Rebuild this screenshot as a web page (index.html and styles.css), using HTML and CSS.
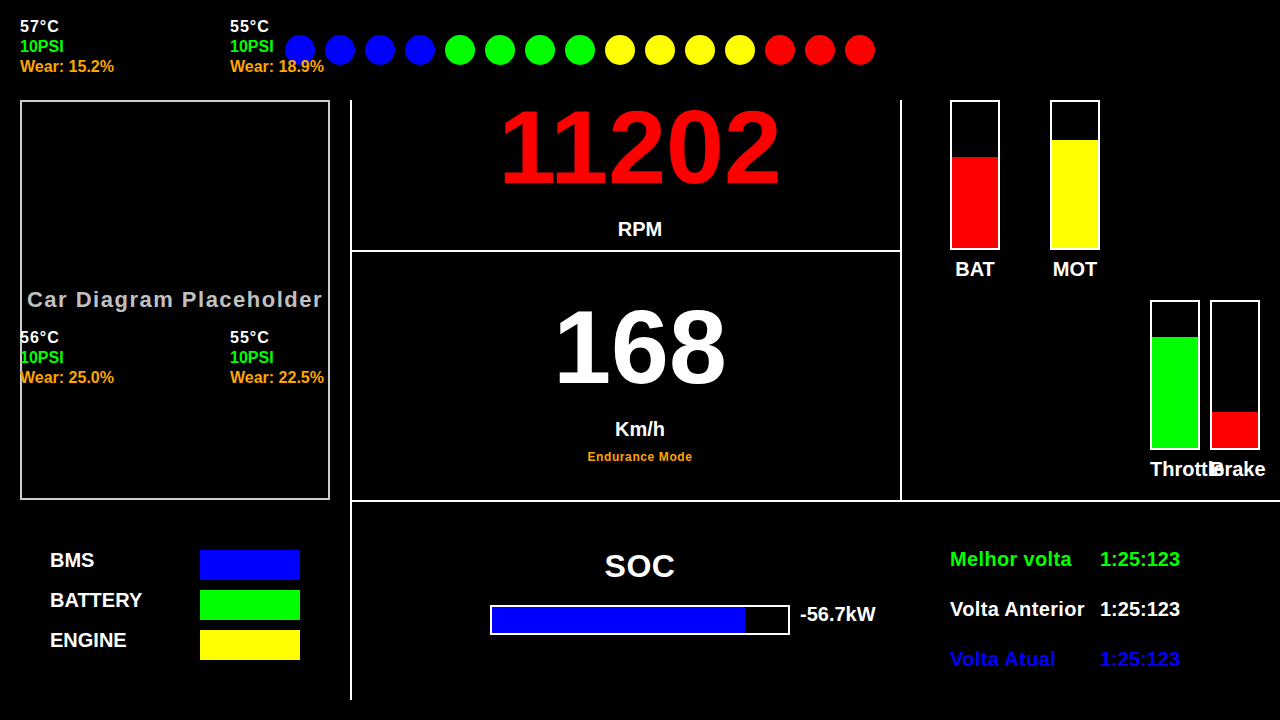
FILE: index.html
```html
<!DOCTYPE html>
<html lang="pt">
<head>
<meta charset="utf-8">
<title>Dashboard</title>
<link rel="stylesheet" href="styles.css">
</head>
<body>
<div class="dash">
  <header class="top">
    <div class="leds">
      <span class="led blue"></span><span class="led blue"></span><span class="led blue"></span><span class="led blue"></span>
      <span class="led green"></span><span class="led green"></span><span class="led green"></span><span class="led green"></span>
      <span class="led yellow"></span><span class="led yellow"></span><span class="led yellow"></span><span class="led yellow"></span>
      <span class="led red"></span><span class="led red"></span><span class="led red"></span>
    </div>
  </header>
  <main class="main">
    <section class="left">
      <div class="car">Car Diagram Placeholder</div>
      <div class="legend">
        <div class="legend-row"><span class="legend-label">BMS</span><span class="swatch blue"></span></div>
        <div class="legend-row"><span class="legend-label">BATTERY</span><span class="swatch green"></span></div>
        <div class="legend-row"><span class="legend-label">ENGINE</span><span class="swatch yellow"></span></div>
      </div>
    </section>
    <section class="panel">
      <div class="upper">
        <div class="gauges">
          <div class="rpm">
            <div class="big rpm-value">11202</div>
            <div class="unit">RPM</div>
          </div>
          <div class="speed">
            <div class="big speed-value">168</div>
            <div class="unit">Km/h</div>
            <div class="mode">Endurance Mode</div>
          </div>
        </div>
        <div class="bars">
          <div class="bar-row temp-bars">
            <div class="meter"><div class="tube"><div class="fill red" style="height:62%"></div></div><div class="meter-label">BAT</div></div>
            <div class="meter"><div class="tube"><div class="fill yellow" style="height:74%"></div></div><div class="meter-label">MOT</div></div>
          </div>
          <div class="bar-row pedal-bars">
            <div class="meter"><div class="tube"><div class="fill green" style="height:76%"></div></div><div class="meter-label">Throttle</div></div>
            <div class="meter"><div class="tube"><div class="fill red" style="height:25%"></div></div><div class="meter-label">Brake</div></div>
          </div>
        </div>
      </div>
      <div class="lower">
        <div class="soc-area">
          <div class="soc">
            <div class="soc-title">SOC</div>
            <div class="soc-bar"><div class="soc-fill" style="width:85.5%"></div></div>
          </div>
          <div class="power">-56.7kW</div>
        </div>
        <div class="laps">
          <div class="lap best"><span class="lap-name">Melhor volta</span><span class="lap-time">1:25:123</span></div>
          <div class="lap prev"><span class="lap-name">Volta Anterior</span><span class="lap-time">1:25:123</span></div>
          <div class="lap current"><span class="lap-name">Volta Atual</span><span class="lap-time">1:25:123</span></div>
        </div>
      </div>
    </section>
  </main>
  <div class="tire tire-fl"><div class="temp">57°C</div><div class="psi">10PSI</div><div class="wear">Wear: 15.2%</div></div>
  <div class="tire tire-fr"><div class="temp">55°C</div><div class="psi">10PSI</div><div class="wear">Wear: 18.9%</div></div>
  <div class="tire tire-rl"><div class="temp">56°C</div><div class="psi">10PSI</div><div class="wear">Wear: 25.0%</div></div>
  <div class="tire tire-rr"><div class="temp">55°C</div><div class="psi">10PSI</div><div class="wear">Wear: 22.5%</div></div>
</div>
</body>
</html>
```

FILE: styles.css
```css
html, body {
  margin: 0;
  padding: 0;
  background: #000;
}
body {
  font-family: "Liberation Sans", Arial, sans-serif;
  font-weight: bold;
  color: #fff;
}
.dash {
  position: relative;
  width: 1280px;
  height: 720px;
  overflow: hidden;
}
.blue { background: #0000ff; }
.green { background: #00ff00; }
.yellow { background: #ffff00; }
.red { background: #ff0000; }

/* LED strip */
.top {
  height: 100px;
  box-sizing: border-box;
  padding: 35px 0 0 285px;
}
.leds {
  display: flex;
  gap: 10px;
}
.led {
  width: 30px;
  height: 30px;
  border-radius: 50%;
}

.main {
  display: flex;
  height: 620px;
}

/* left column */
.left {
  width: 350px;
  flex: none;
}
.car {
  margin-left: 20px;
  width: 310px;
  height: 400px;
  box-sizing: border-box;
  border: 2px solid #cccccc;
  display: flex;
  align-items: center;
  justify-content: center;
  color: #c0c0c0;
  font-size: 22px;
  letter-spacing: 1.5px;
  white-space: nowrap;
}
.legend {
  margin-top: 50px;
  padding-left: 50px;
  display: flex;
  flex-direction: column;
  gap: 10px;
}
.legend-row {
  display: flex;
  height: 30px;
}
.legend-label {
  width: 150px;
  font-size: 20px;
  line-height: 20px;
}
.swatch {
  width: 100px;
  height: 30px;
}

/* right area */
.panel {
  width: 930px;
  flex: none;
  height: 600px;
  border-left: 2px solid #fff;
  display: flex;
  flex-direction: column;
}
.upper {
  height: 400px;
  display: flex;
  border-bottom: 2px solid #fff;
}
.gauges {
  width: 548px;
  flex: none;
  border-right: 2px solid #fff;
  display: flex;
  flex-direction: column;
}
.rpm {
  height: 148px;
  padding: 2px 0 0 28px;
  border-bottom: 2px solid #fff;
  text-align: center;
}
.speed {
  flex: 1;
  padding: 50px 0 0 28px;
  text-align: center;
}
.big {
  font-size: 104px;
  line-height: 90px;
  margin-bottom: 27px;
}
.rpm-value { color: #ff0000; }
.speed-value { color: #fff; }
.unit {
  font-size: 20px;
  line-height: 20px;
}
.mode {
  margin-top: 11px;
  font-size: 12px;
  line-height: 14px;
  letter-spacing: 0.6px;
  color: #ffa500;
}

/* vertical meters */
.bars {
  flex: 1;
  padding-left: 48px;
}
.bar-row {
  display: flex;
}
.temp-bars {
  gap: 50px;
}
.pedal-bars {
  margin: 21px 0 0 200px;
  gap: 10px;
}
.meter {
  width: 50px;
  display: flex;
  flex-direction: column;
}
.tube {
  height: 150px;
  box-sizing: border-box;
  border: 2px solid #fff;
  display: flex;
  flex-direction: column;
  justify-content: flex-end;
}
.fill {
  width: 100%;
}
.meter-label {
  margin-top: 9px;
  font-size: 20px;
  line-height: 20px;
  text-align: center;
  white-space: nowrap;
}

/* bottom strip */
.lower {
  height: 198px;
  display: flex;
}
.soc-area {
  width: 598px;
  flex: none;
  box-sizing: border-box;
  padding: 46px 0 0 138px;
  display: flex;
  align-items: flex-start;
}
.soc {
  width: 300px;
  text-align: center;
}
.soc-title {
  font-size: 32px;
  line-height: 36px;
  margin-bottom: 21px;
  letter-spacing: 0.5px;
}
.soc-bar {
  height: 30px;
  box-sizing: border-box;
  border: 2px solid #fff;
}
.soc-fill {
  height: 100%;
  background: #0000ff;
}
.power {
  margin: 56px 0 0 10px;
  font-size: 20px;
  line-height: 20px;
}
.laps {
  padding-top: 47px;
  display: flex;
  flex-direction: column;
  gap: 30px;
}
.lap {
  display: flex;
  font-size: 20px;
  line-height: 20px;
  white-space: nowrap;
}
.lap-name {
  width: 150px;
  letter-spacing: 0.35px;
}
.best { color: #00ff00; }
.prev { color: #fff; }
.current { color: #0000ff; }

/* tyre readouts over the car diagram */
.tire {
  position: absolute;
  font-size: 16px;
  line-height: 20px;
  white-space: nowrap;
}
.tire-fl { left: 20px; top: 17px; }
.tire-fr { left: 230px; top: 17px; }
.tire-rl { left: 20px; top: 328px; }
.tire-rr { left: 230px; top: 328px; }
.temp { color: #fff; letter-spacing: 1px; }
.psi { color: #00ff00; }
.wear { color: #ffa500; }
```
